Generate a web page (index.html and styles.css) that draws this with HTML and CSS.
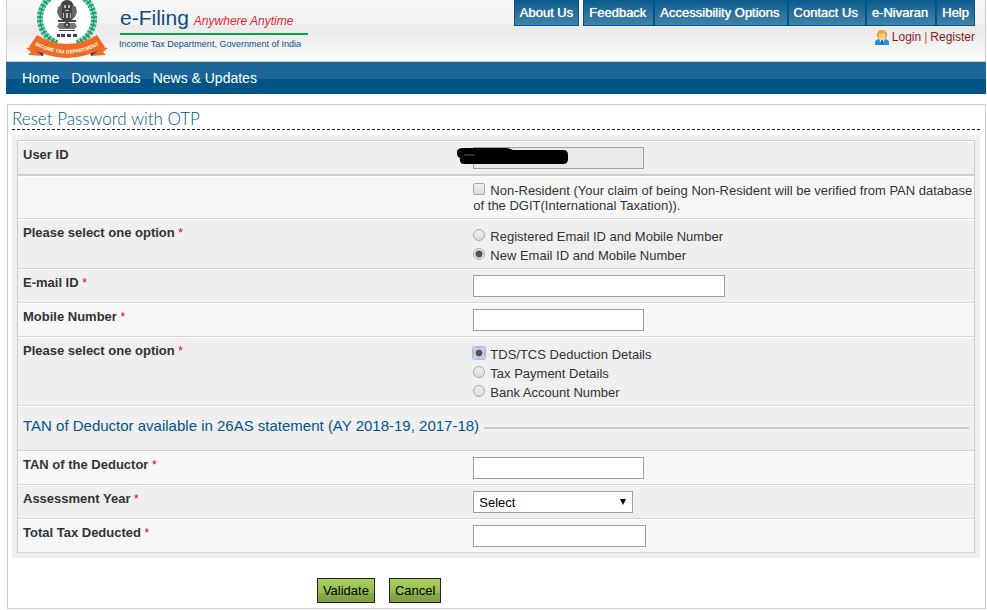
FILE: index.html
```html
<!DOCTYPE html>
<html lang="en">
<head>
<meta charset="utf-8">
<title>e-Filing - Reset Password with OTP</title>
<link rel="stylesheet" href="styles.css">
</head>
<body>
<header class="header">
  <div class="brand">
    <svg class="emblem" viewBox="0 0 86 60" aria-hidden="true">
      <circle cx="42" cy="18" r="25" fill="#fff"/>
      <path d="M32 43A26 26 0 0 1 28-4M52 43A26 26 0 0 0 56-4" fill="none" stroke="#9bd8c0" stroke-width="6"/>
      <path d="M32 43A26 26 0 0 1 28-4M52 43A26 26 0 0 0 56-4" fill="none" stroke="#23a67c" stroke-width="6" stroke-dasharray="2 2"/>
      <path d="M32 43A26 26 0 0 1 28-4M52 43A26 26 0 0 0 56-4" fill="none" stroke="#16906b" stroke-width="1"/>
      <g fill="#444">
        <path d="M37 2q5-4 10 0l2 4-1 5 1 7-3 2H38l-3-2 1-7-1-5z"/>
        <path d="M37 5l-4 2-1 5 2 5 3 2zM47 5l4 2 1 5-2 5-3 2z" fill="#666"/>
        <path d="M33 20h18v2H33z"/>
        <path d="M34 23h16l2 4-3 2H35l-3-2z" fill="#777"/>
        <circle cx="42" cy="25" r="3"/>
        <path d="M34 30h16v1H34zM32 34h3v3h-3zM36 34h4v3h-4zM42 34h4v3h-4zM48 34h4v3h-4z"/>
      </g>
      <path d="M39 5h2v3h-2zM43 5h2v3h-2zM40 10h4v1h-4zM38 13h1v5h-1zM41 13h2v5h-2zM45 13h1v5h-1zM41 24h2v2h-2z" fill="#bbb"/>
      <path d="M10 47L1 48l5 4-3 3 15 1-1-7zM74 47l9 1-5 4 3 3-15 1 1-7z" fill="#e8702a"/>
      <path d="M9 49l9 7 1-5zM75 49l-9 7-1-5z" fill="#17289a"/>
      <path d="M12 35Q42 53 72 35L80 47Q42 69 4 47z" fill="#ef6c22"/>
      <path id="ribbon" d="M6 43Q42 64 78 43" fill="none"/>
      <text class="ribbon-text"><textPath href="#ribbon" startOffset="50%">INCOME TAX DEPARTMENT</textPath></text>
    </svg>
    <div class="brand-text">
      <div class="brand-line"><span class="brand-name">e-Filing</span> <span class="brand-tag">Anywhere Anytime</span></div>
      <div class="brand-dept">Income Tax Department, Government of India</div>
    </div>
  </div>
  <div class="top">
    <nav class="links" aria-label="Site links">
      <a class="about" href="#">About Us</a>
      <a href="#">Feedback</a>
      <a href="#">Accessibility Options</a>
      <a href="#">Contact Us</a>
      <a href="#">e-Nivaran</a>
      <a class="last" href="#">Help</a>
    </nav>
    <div class="account">
      <svg class="user-icon" viewBox="0 0 14 15" aria-hidden="true">
        <path d="M0 15v-3q0-2 4-3h6q4 1 4 3v3z" fill="#2a8fdf"/>
        <path d="M4 9l3 5 3-5z" fill="#fff"/><path d="M6 10h2v5H6z" fill="#1668b4"/>
        <ellipse cx="7" cy="5" rx="5" ry="5" fill="#e58a22"/>
        <ellipse cx="7" cy="6" rx="3.500" ry="4" fill="#ffd08a"/>
        <path d="M3 4q4 1 6-2l2 3-1-4-5-1z" fill="#f5aa3c"/>
      </svg>
      <a href="#">Login</a><span>|</span><a href="#">Register</a>
    </div>
  </div>
</header>
<nav class="menu" aria-label="Main menu">
  <a href="#">Home</a>
  <a href="#">Downloads</a>
  <a href="#">News &amp; Updates</a>
</nav>
<main class="content">
  <h1>Reset Password with OTP</h1>
  <form>
    <div class="panel">
      <div class="rows">
        <div class="row first">
          <label class="name" for="user">User ID</label>
          <div class="field"><input class="text" id="user" type="text" readonly>
            <svg class="redaction" viewBox="0 0 114 20" aria-hidden="true">
              <path d="M6 1Q0 2 1 6Q1 10 4 11Q3 17 8 17L107 17Q112 17 112 12V8Q112 3 107 3H57Q54 1 50 1z" fill="#000"/>
              <path d="M8 8h11" stroke="#555" stroke-width="1"/>
            </svg>
          </div>
        </div>
        <div class="row">
          <div class="name"></div>
          <div class="field resident"><input class="tick" id="nri" type="checkbox"><label for="nri">Non-Resident (Your claim of being Non-Resident will be verified from PAN database of the DGIT(International Taxation)).</label></div>
        </div>
        <div class="row" role="radiogroup" aria-labelledby="contact-label">
          <div class="name" id="contact-label">Please select one option <span class="star">*</span></div>
          <div class="field options">
            <label><input class="tick" type="radio" name="contact">Registered Email ID and Mobile Number</label>
            <label><input class="tick" type="radio" name="contact" checked>New Email ID and Mobile Number</label>
          </div>
        </div>
        <div class="row">
          <label class="name" for="email">E-mail ID <span class="star">*</span></label>
          <div class="field"><input class="text wide" id="email" type="text"></div>
        </div>
        <div class="row">
          <label class="name" for="mobile">Mobile Number <span class="star">*</span></label>
          <div class="field"><input class="text" id="mobile" type="text"></div>
        </div>
        <div class="row" role="radiogroup" aria-labelledby="details-label">
          <div class="name" id="details-label">Please select one option <span class="star">*</span></div>
          <div class="field options">
            <label><span class="ring"><input class="tick" type="radio" name="details" checked></span>TDS/TCS Deduction Details</label>
            <label><input class="tick" type="radio" name="details">Tax Payment Details</label>
            <label><input class="tick" type="radio" name="details">Bank Account Number</label>
          </div>
        </div>
        <div class="row section"><h2>TAN of Deductor available in 26AS statement (AY 2018-19, 2017-18)</h2></div>
        <div class="row">
          <label class="name" for="tan">TAN of the Deductor <span class="star">*</span></label>
          <div class="field"><input class="text" id="tan" type="text"></div>
        </div>
        <div class="row">
          <label class="name" for="year">Assessment Year <span class="star">*</span></label>
          <div class="field"><div class="select"><select id="year"><option>Select</option></select></div></div>
        </div>
        <div class="row">
          <label class="name" for="tax">Total Tax Deducted <span class="star">*</span></label>
          <div class="field"><input class="text" id="tax" type="text"></div>
        </div>
      </div>
    </div>
    <div class="actions">
      <button type="button">Validate</button>
      <button type="button">Cancel</button>
    </div>
  </form>
</main>
</body>
</html>
```
FILE: styles.css
```css
* { box-sizing: border-box; }
body {
  margin: 0 1px 0 6px;
  font: 13px/15px "Liberation Sans", Arial, sans-serif;
  color: #333;
  background: #fff;
}
a { text-decoration: none; }
.header {
  display: flex;
  justify-content: space-between;
  min-height: 62px;
  padding: 0 10px 0 18px;
  border: 1px solid #ccc;
  border-top: 0;
  background: linear-gradient(#f8f8f8 0, #f2f2f2 24px, #eaeaea 25px, #ececec 36px, #fefefe 60px);
}
.brand { display: flex; gap: 8px; }
.emblem { width: 86px; height: 60px; }
.ribbon-text {
  font: bold 5px "Liberation Sans", Arial, sans-serif;
  fill: #fff;
  text-anchor: middle;
}
.brand-text { min-width: 190px; padding-top: 5px; color: #0b4f87; }
.brand-line {
  display: flex;
  align-items: baseline;
  gap: 5px;
  height: 30px;
  margin: 0 1px;
  border-bottom: 2px solid #0a9f4b;
}
.brand-name { font-size: 21px; line-height: 26px; }
.brand-tag { font-size: 12px; font-style: italic; color: #ee1c2e; }
.brand-dept { margin-top: 2px; font-size: 9px; line-height: 14px; white-space: nowrap; }
.links { display: flex; }
.links a {
  height: 26px;
  padding: 5px 7px 0 5px;
  border: 1px solid #005689;
  border-width: 0 1px 1px;
  background: linear-gradient(#0b5c8e, #4382a9);
  color: #fff;
  text-shadow: 0 0 1px #fff;
}
.links .about { margin-right: 4px; }
.links .about, .links .last { padding-right: 5px; }
.account {
  display: flex;
  justify-content: flex-end;
  gap: 3px;
  padding-top: 4px;
  font-size: 12px;
  color: #b5651d;
}
.account a { color: #8b1a1a; }
.user-icon { width: 14px; height: 15px; }
.menu {
  display: flex;
  gap: 12px;
  height: 32px;
  padding: 0 16px;
  background: linear-gradient(#1c6797 17px, #005689 17px);
  font-size: 14px;
  line-height: 32px;
}
.menu a { color: #fff; }
.content {
  margin: 10px 0 1px 1px;
  padding: 4px 5px 5px 4px;
  border: 1px solid #ccc;
}
h1 {
  margin: 0 0 5px;
  height: 21px;
  border-bottom: 1px dashed #222;
  font: 300 17px/20px Lato, "Century Gothic", sans-serif;
  color: #005689;
}
.panel { padding: 5px; background: #efefef; }
.rows { border: 1px solid #ccc; border-bottom: 0; }
.row {
  display: grid;
  grid-template-columns: 47% 1fr;
  min-height: 34px;
  border-top: 1px solid #fff;
  border-bottom: 1px solid #d6d6d6;
  background: #efefef;
}
.row:nth-child(2), .row:nth-child(5), .row:nth-child(8), .row:nth-child(10) { background: #f7f7f7; }
.first { min-height: 35px; border-bottom: 2px solid #ccc; }
.name { padding: 5px; font-weight: bold; }
.star { font-size: 12px; font-weight: normal; color: #d9001b; }
.field { position: relative; padding: 5px 6px; }
.resident { padding: 6px 0 5px 6px; }
.text, .select {
  display: block;
  width: 171px;
  height: 22px;
  border: 1px solid #a0a0a0;
  background: #fff;
  font: inherit;
}
.wide { width: 252px; }
#tax { width: 173px; }
#user { background: #e9e9e9; }
.redaction { position: absolute; top: 5px; left: -11px; width: 114px; height: 20px; }
.select { position: relative; width: 160px; }
.select::after {
  content: "";
  position: absolute;
  right: 6px;
  top: 7px;
  border: 3px solid transparent;
  border-top: 6px solid #000;
  border-bottom: 0;
  pointer-events: none;
}
select {
  appearance: none;
  width: 100%;
  height: 20px;
  padding: 0 5px;
  border: 0;
  background: none;
  font: inherit;
  color: #000;
}
.tick {
  appearance: none;
  display: inline-block;
  width: 12px;
  height: 12px;
  margin: 0 5px 0 0;
  border: 1px solid #a8a8a8;
  border-radius: 2px;
  background: linear-gradient(#eee, #ddd);
  vertical-align: 0;
}
.tick[type="radio"] { border-radius: 50%; }
.tick[type="radio"]:checked { background: radial-gradient(circle, #555 3px, #e6e6e6 4px); }
.ring {
  display: inline-block;
  height: 12px;
  margin-right: 5px;
  border-radius: 1px;
  outline: 1px solid #a3c3fa;
  background: #c5d9fb;
  line-height: 12px;
}
.ring .tick { display: block; margin: 0; }
.options { display: grid; padding-top: 7px; padding-bottom: 3px; }
.options label { line-height: 19px; }
.section { display: block; min-height: 45px; padding: 10px 5px; }
.section h2 {
  display: flex;
  align-items: center;
  gap: 5px;
  margin: 0;
  font: 15px/18px "Liberation Sans", Arial, sans-serif;
  color: #005689;
}
.section h2::after { content: ""; flex: 1; height: 2px; background: #ccc; margin-top: 4px; }
.actions { display: flex; gap: 14px; padding: 20px 0 0 31.5%; }
button {
  height: 25px;
  padding: 0 5px;
  border: 1px solid #222;
  background: linear-gradient(#a9cf5c, #95bc50 60%, #86ab49 60%, #7ca144);
  font: inherit;
  color: #000;
}
```
